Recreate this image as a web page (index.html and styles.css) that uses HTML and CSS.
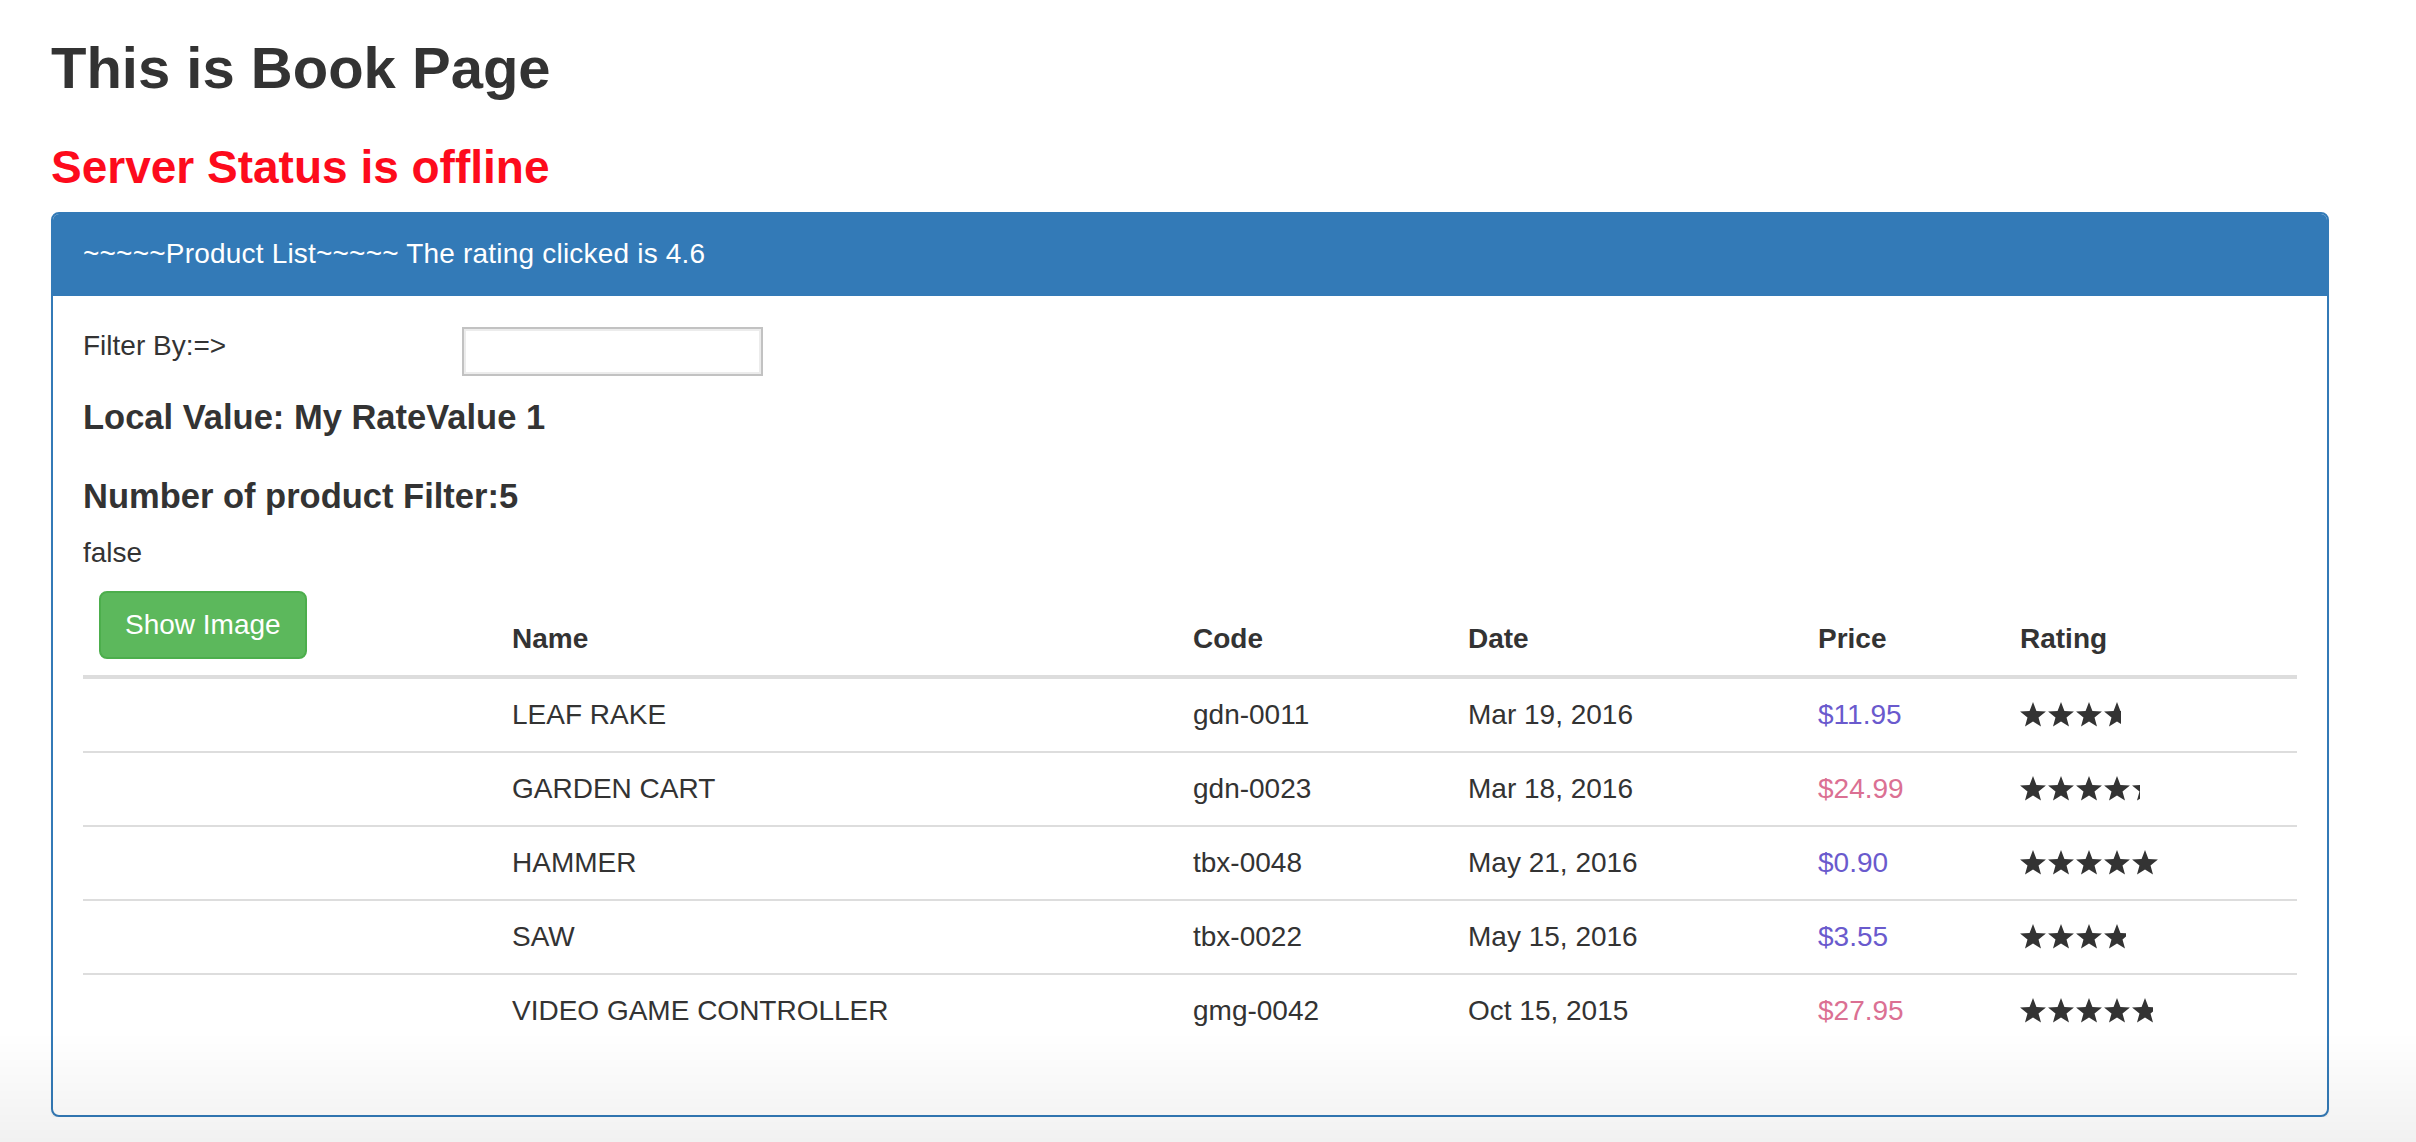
FILE: index.html
```html
<!DOCTYPE html>
<html lang="en">
<head>
<meta charset="utf-8">
<title>Book Page</title>
<link rel="stylesheet" href="styles.css">
</head>
<body>
<svg class="defs" width="0" height="0" aria-hidden="true">
  <defs>
    <symbol id="star" viewBox="0 0 26 25">
      <polygon points="13,0 16.41,8.91 25.93,9.4 18.52,15.39 21,24.6 13,19.4 5,24.6 7.48,15.39 0.07,9.4 9.59,8.91"/>
    </symbol>
  </defs>
</svg>
<div class="page">
  <h1 class="title">This is Book Page</h1>
  <h3 class="status">Server Status is offline</h3>
  <div class="panel">
    <div class="panel-heading">~~~~~Product List~~~~~ The rating clicked is 4.6</div>
    <div class="panel-body">
      <div class="filter-row">
        <div class="col-label">Filter By:=&gt;</div>
        <div class="col-input"><input type="text" class="filter-input"></div>
      </div>
      <h4 class="sub sub-first">Local Value: My RateValue 1</h4>
      <h4 class="sub sub-second">Number of product Filter:5</h4>
      <div class="flag">false</div>
      <table class="products">
        <colgroup>
          <col class="c-img"><col class="c-name"><col class="c-code"><col class="c-date"><col class="c-price"><col class="c-rating">
        </colgroup>
        <thead>
          <tr>
            <th><button class="btn-show" type="button">Show Image</button></th>
            <th>Name</th>
            <th>Code</th>
            <th>Date</th>
            <th>Price</th>
            <th>Rating</th>
          </tr>
        </thead>
        <tbody>
          <tr>
            <td></td><td>LEAF RAKE</td><td>gdn-0011</td><td>Mar 19, 2016</td><td class="price low">$11.95</td>
            <td><div class="crop" style="width:101px"><div class="stars"><svg><use href="#star"/></svg><svg><use href="#star"/></svg><svg><use href="#star"/></svg><svg><use href="#star"/></svg><svg><use href="#star"/></svg></div></div></td>
          </tr>
          <tr>
            <td></td><td>GARDEN CART</td><td>gdn-0023</td><td>Mar 18, 2016</td><td class="price high">$24.99</td>
            <td><div class="crop" style="width:120px"><div class="stars"><svg><use href="#star"/></svg><svg><use href="#star"/></svg><svg><use href="#star"/></svg><svg><use href="#star"/></svg><svg><use href="#star"/></svg></div></div></td>
          </tr>
          <tr>
            <td></td><td>HAMMER</td><td>tbx-0048</td><td>May 21, 2016</td><td class="price low">$0.90</td>
            <td><div class="crop" style="width:150px"><div class="stars"><svg><use href="#star"/></svg><svg><use href="#star"/></svg><svg><use href="#star"/></svg><svg><use href="#star"/></svg><svg><use href="#star"/></svg></div></div></td>
          </tr>
          <tr>
            <td></td><td>SAW</td><td>tbx-0022</td><td>May 15, 2016</td><td class="price low">$3.55</td>
            <td><div class="crop" style="width:106px"><div class="stars"><svg><use href="#star"/></svg><svg><use href="#star"/></svg><svg><use href="#star"/></svg><svg><use href="#star"/></svg><svg><use href="#star"/></svg></div></div></td>
          </tr>
          <tr>
            <td></td><td>VIDEO GAME CONTROLLER</td><td>gmg-0042</td><td>Oct 15, 2015</td><td class="price high">$27.95</td>
            <td><div class="crop" style="width:133px"><div class="stars"><svg><use href="#star"/></svg><svg><use href="#star"/></svg><svg><use href="#star"/></svg><svg><use href="#star"/></svg><svg><use href="#star"/></svg></div></div></td>
          </tr>
        </tbody>
      </table>
    </div>
  </div>
</div>
</body>
</html>
```
FILE: styles.css
```css
html, body {
  margin: 0;
  padding: 0;
  background: #fff;
  overflow: hidden;
}
body {
  font-family: "Liberation Sans", Arial, Helvetica, sans-serif;
  font-size: 28px;
  line-height: 40px;
  color: #333;
}
body::after {
  content: "";
  position: fixed;
  left: 0;
  right: 0;
  bottom: 0;
  height: 110px;
  background: linear-gradient(to bottom, rgba(0,0,0,0), rgba(0,0,0,0.055));
  pointer-events: none;
}
.defs {
  position: absolute;
  width: 0;
  height: 0;
  overflow: hidden;
}
.page {
  padding: 0 87px 0 51px;
}
.title {
  margin: 36px 0 0;
  font-size: 58px;
  line-height: 64px;
  font-weight: bold;
  color: #333;
}
.status {
  margin: 42px 0 0;
  font-size: 46px;
  line-height: 51px;
  font-weight: bold;
  color: #fd0b1c;
}
.panel {
  margin-top: 19px;
  border: 2px solid #337ab7;
  border-radius: 8px;
  background: #fff;
  box-shadow: 0 2px 2px rgba(0,0,0,0.06);
}
.panel-heading {
  background: #337ab7;
  color: #fff;
  padding: 20px 30px 22px;
  border-radius: 6px 6px 0 0;
  letter-spacing: 0.2px;
}
.panel-body {
  padding: 30px 30px 30px;
}
.filter-row {
  display: flex;
  align-items: flex-start;
}
.col-label {
  width: 379px;
  flex: none;
}
.col-input {
  flex: none;
}
.filter-input {
  display: block;
  box-sizing: border-box;
  width: 301px;
  height: 49px;
  margin: 1px 0 0;
  border: 2px solid #c2c2c2;
  box-shadow: inset 0 0 0 2px #ececec;
  background: #fff;
  font: inherit;
  padding: 0 8px;
}
.sub {
  margin: 0;
  font-size: 34.5px;
  line-height: 37px;
  font-weight: bold;
  color: #333;
}
.sub-first {
  margin-top: 23px;
}
.sub-second {
  margin-top: 42px;
  margin-bottom: 18px;
}
.flag {
  line-height: 40px;
}
.products {
  width: 100%;
  table-layout: fixed;
  border-collapse: collapse;
  margin-top: 2px;
  margin-bottom: 38px;
}
.c-img { width: 413px; }
.c-name { width: 681px; }
.c-code { width: 275px; }
.c-date { width: 350px; }
.c-price { width: 202px; }
.c-rating { width: 293px; }
.products th {
  text-align: left;
  font-weight: bold;
  vertical-align: bottom;
  padding: 16px;
  border-bottom: 4px solid #ddd;
  line-height: 40px;
}
.products td {
  vertical-align: top;
  padding: 16px;
  border-top: 2px solid #ddd;
  line-height: 40px;
  white-space: nowrap;
}
.btn-show {
  display: block;
  box-sizing: border-box;
  height: 68px;
  padding: 0 24px;
  background: #5cb85c;
  border: 2px solid #4cae4c;
  border-radius: 8px;
  color: #fff;
  font-family: inherit;
  font-size: 28px;
  line-height: 64px;
  font-weight: normal;
}
.price.low { color: #6a5acd; }
.price.high { color: #db7093; }
.crop {
  overflow: hidden;
  height: 40px;
}
.stars {
  display: flex;
  align-items: center;
  gap: 2px;
  width: 150px;
  height: 38px;
}
.stars svg {
  width: 26px;
  height: 25px;
  flex: none;
  fill: #333;
}
```
